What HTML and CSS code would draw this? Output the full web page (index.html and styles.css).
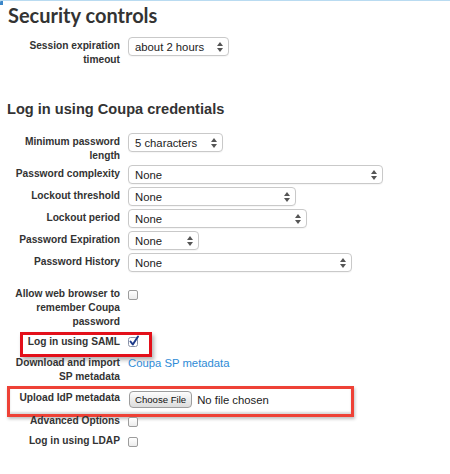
FILE: index.html
```html
<!DOCTYPE html>
<html>
<head>
<meta charset="utf-8">
<link rel="stylesheet" href="styles.css">
</head>
<body>
<div class="page">
  <h1 class="title">Security controls</h1>

  <div class="row r-session">
    <div class="label">Session expiration<br>timeout</div>
    <div class="select w-session"><span>about 2 hours</span><svg class="arrows" width="6" height="10" viewBox="0 0 6 10"><polygon points="0,4 3,0 6,4"/><polygon points="0,6 3,10 6,6"/></svg></div>
  </div>

  <h2 class="subtitle">Log in using Coupa credentials</h2>

  <div class="row r-min">
    <div class="label">Minimum password<br>length</div>
    <div class="select w-min"><span>5 characters</span><svg class="arrows" width="6" height="10" viewBox="0 0 6 10"><polygon points="0,4 3,0 6,4"/><polygon points="0,6 3,10 6,6"/></svg></div>
  </div>
  <div class="row r-tight">
    <div class="label">Password complexity</div>
    <div class="select w-complex"><span>None</span><svg class="arrows" width="6" height="10" viewBox="0 0 6 10"><polygon points="0,4 3,0 6,4"/><polygon points="0,6 3,10 6,6"/></svg></div>
  </div>
  <div class="row">
    <div class="label">Lockout threshold</div>
    <div class="select w-thresh"><span>None</span><svg class="arrows" width="6" height="10" viewBox="0 0 6 10"><polygon points="0,4 3,0 6,4"/><polygon points="0,6 3,10 6,6"/></svg></div>
  </div>
  <div class="row">
    <div class="label">Lockout period</div>
    <div class="select w-period"><span>None</span><svg class="arrows" width="6" height="10" viewBox="0 0 6 10"><polygon points="0,4 3,0 6,4"/><polygon points="0,6 3,10 6,6"/></svg></div>
  </div>
  <div class="row">
    <div class="label">Password Expiration</div>
    <div class="select w-exp"><span>None</span><svg class="arrows" width="6" height="10" viewBox="0 0 6 10"><polygon points="0,4 3,0 6,4"/><polygon points="0,6 3,10 6,6"/></svg></div>
  </div>
  <div class="row">
    <div class="label">Password History</div>
    <div class="select w-hist"><span>None</span><svg class="arrows" width="6" height="10" viewBox="0 0 6 10"><polygon points="0,4 3,0 6,4"/><polygon points="0,6 3,10 6,6"/></svg></div>
  </div>

  <div class="row r-allow">
    <div class="label">Allow web browser to<br>remember Coupa<br>password</div>
    <div class="cb"></div>
  </div>

  <div class="row r-saml">
    <div class="label">Log in using SAML</div>
    <svg class="cb-checked" width="13" height="13" viewBox="0 0 13 13"><rect x="1.5" y="2.5" width="9" height="9" rx="2" fill="#fff" stroke="#8a93a8"/><path d="M3.5 6.5 L5.8 9.5 L11 1.5" fill="none" stroke="#1c3a8a" stroke-width="2" stroke-linecap="round" stroke-linejoin="round"/></svg>
  </div>

  <div class="row r-download">
    <div class="label">Download and import<br>SP metadata</div>
    <a class="link" href="#">Coupa SP metadata</a>
  </div>

  <div class="row r-upload">
    <div class="label">Upload IdP metadata</div>
    <div class="file"><span class="file-btn">Choose File</span><span class="file-name">No file chosen</span></div>
  </div>

  <div class="row r-adv">
    <div class="label">Advanced Options</div>
    <div class="cb"></div>
  </div>

  <div class="row r-ldap">
    <div class="label">Log in using LDAP</div>
    <div class="cb"></div>
  </div>
</div>
</body>
</html>
```

FILE: styles.css
```css
* { box-sizing: border-box; }

body {
  margin: 0;
  background: #fff;
  font-family: "Liberation Sans", Arial, Helvetica, sans-serif;
  color: #333;
}

.page {
  position: relative;
  height: 474px;
  overflow: hidden;
  border-top: 1px solid #b9dbf1;
}

.page::before {
  content: "";
  position: absolute;
  left: 0;
  top: -1px;
  width: 3px;
  height: 5px;
  border-top-left-radius: 3px;
  background: #3b86c8;
}

.title {
  margin: 2px 0 0 8px;
  font: 700 20px/24px Lato, "Liberation Sans", sans-serif;
  color: #333;
}

.subtitle {
  margin: 33px 0 0 7px;
  font: 700 14.6px/18px "Liberation Sans", Arial, sans-serif;
  color: #333;
}

.row {
  position: relative;
  display: grid;
  grid-template-columns: 120px auto;
  column-gap: 8px;
  align-items: start;
  justify-items: start;
  margin-top: 3px;
}

.label {
  justify-self: end;
  text-align: right;
  font-weight: 700;
  font-size: 10.2px;
  line-height: 14px;
  padding-top: 2px;
  color: #333;
  white-space: nowrap;
}

.r-session { margin-top: 10px; }
.r-min { margin-top: 15px; }
.r-tight { margin-top: 2px; }
.r-allow { margin-top: 13px; }
.r-saml { margin-top: 4px; }
.r-download { margin-top: 5px; }
.r-upload { margin-top: 5px; }
.r-adv { margin-top: 4px; }
.r-ldap { margin-top: 4px; }

.select {
  display: flex;
  align-items: center;
  justify-content: space-between;
  height: 19px;
  padding: 0 5px 0 6px;
  border: 1px solid #c9c9c9;
  border-radius: 4px;
  background: #fff;
  font-size: 11.3px;
  color: #222;
  box-shadow: 0 1px 1px rgba(0, 0, 0, 0.04);
}

.arrows { flex: none; fill: #555; }

.w-session { width: 101px; }
.w-min { width: 95px; }
.w-complex { width: 255px; }
.w-thresh { width: 168px; }
.w-period { width: 179px; }
.w-exp { width: 71px; }
.w-hist { width: 224px; }

.cb {
  width: 10px;
  height: 10px;
  margin-top: 5px;
  border: 1px solid #9c9c9c;
  border-radius: 2px;
  background: linear-gradient(#fff, #ececec);
}

.cb-checked { margin-top: 2px; margin-left: -1px; }

.r-saml::after {
  content: "";
  position: absolute;
  left: 20px;
  top: -1px;
  width: 126px;
  height: 19px;
  border: 3px solid #e3101a;
  box-shadow: 2px 3px 4px rgba(0, 0, 0, 0.3);
  pointer-events: none;
}

.link {
  font-size: 11.3px;
  line-height: 14px;
  padding-top: 2px;
  color: #2e8bd6;
  text-decoration: none;
}

.file {
  display: flex;
  align-items: center;
  gap: 5px;
  margin-top: 2px;
}

.file-btn {
  display: inline-flex;
  align-items: center;
  height: 17px;
  padding: 0 5px;
  margin-left: 1px;
  border: 1px solid #9d9d9d;
  border-radius: 4px;
  background: linear-gradient(#fdfdfd, #dcdcdc);
  font-size: 9.6px;
  color: #111;
}

.file-name {
  font-size: 11.3px;
  color: #222;
}

.r-upload::after {
  content: "";
  position: absolute;
  left: 7px;
  top: -3px;
  width: 341px;
  height: 25px;
  border: 3px solid #ee4136;
  box-shadow: 1px 2px 3px rgba(0, 0, 0, 0.25), inset 0 -2px 2px rgba(0, 0, 0, 0.15);
  pointer-events: none;
}
```
